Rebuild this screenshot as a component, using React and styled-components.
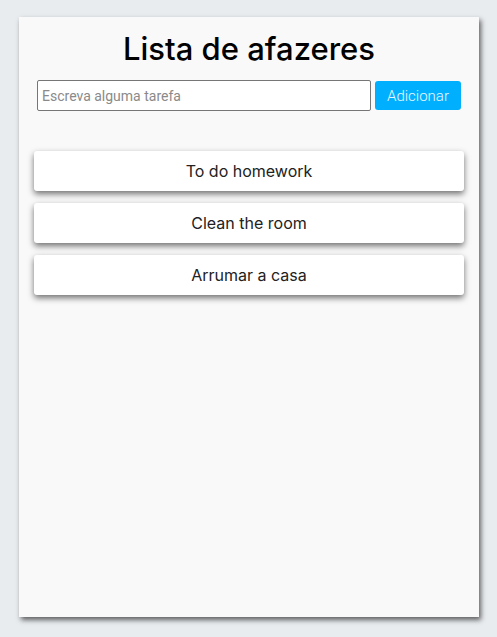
import React, { useState } from 'react';
import styled, { createGlobalStyle } from 'styled-components';

const GlobalStyle = createGlobalStyle`
  html, body {
    margin: 0;
    padding: 0;
    background: #e9ecef;
  }
  body {
    font-family: Inter, "Noto Sans", sans-serif;
  }
`;

const Page = styled.div`
  padding: 17px 18px 20px 19px;
`;

const Card = styled.main`
  width: 460px;
  height: 600px;
  box-sizing: border-box;
  background: #f9f9f9;
  box-shadow: 2px 3px 5px rgba(0, 0, 0, 0.6);
  padding: 12px 15px;
`;

const Title = styled.h1`
  margin: 0;
  text-align: center;
  font-family: Inter, sans-serif;
  font-weight: 500;
  font-size: 31px;
  line-height: 40px;
  color: #000;
`;

const Form = styled.form`
  display: flex;
  gap: 4px;
  align-items: center;
  padding: 11px 3px 0;
  margin-bottom: 40px;
`;

const Input = styled.input`
  flex: 1;
  height: 31px;
  box-sizing: border-box;
  border: 1px solid #767676;
  border-radius: 2px;
  background: #fff;
  padding: 0 4px;
  font-family: Roboto, sans-serif;
  font-size: 14px;
  color: #333;

  &::placeholder {
    color: #8a8a8a;
  }
`;

const AddButton = styled.button`
  width: 86px;
  height: 29px;
  border: none;
  border-radius: 3px;
  background: #00b0ff;
  color: #e8f7ff;
  font-family: Roboto, sans-serif;
  font-weight: 300;
  font-size: 15px;
  cursor: pointer;
`;

const List = styled.ul`
  list-style: none;
  margin: 0;
  padding: 0;
  display: flex;
  flex-direction: column;
  gap: 12px;
`;

const Item = styled.li`
  height: 40px;
  display: flex;
  align-items: center;
  justify-content: center;
  background: #fff;
  border-radius: 3px;
  box-shadow: 0 3px 6px rgba(0, 0, 0, 0.55);
  font-family: Inter, sans-serif;
  font-size: 16px;
  color: #222;
`;

export default function App() {
  const [tasks, setTasks] = useState(['To do homework', 'Clean the room', 'Arrumar a casa']);
  const [text, setText] = useState('');

  const handleSubmit = (e) => {
    e.preventDefault();
    if (!text.trim()) return;
    setTasks([...tasks, text]);
    setText('');
  };

  return (
    <>
      <GlobalStyle />
      <Page>
        <Card>
          <Title>Lista de afazeres</Title>
          <Form onSubmit={handleSubmit}>
            <Input
              placeholder='Escreva alguma tarefa'
              value={text}
              onChange={(e) => setText(e.target.value)}
            />
            <AddButton type='submit'>Adicionar</AddButton>
          </Form>
          <List>
            {tasks.map((t, i) => (
              <Item key={i}>{t}</Item>
            ))}
          </List>
        </Card>
      </Page>
    </>
  );
}
